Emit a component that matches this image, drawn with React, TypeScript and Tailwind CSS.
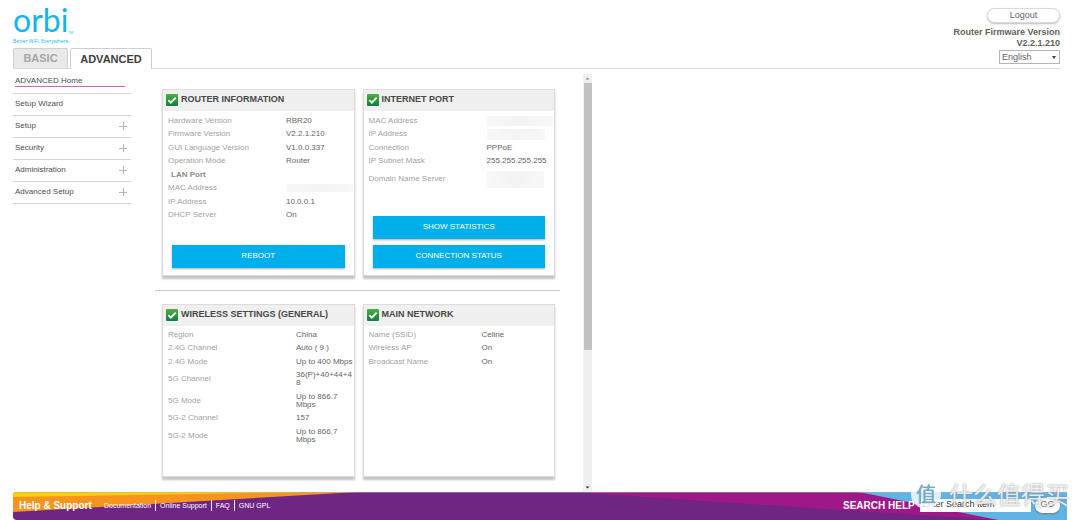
import React from "react";

type Row = { label: string; value?: string; tall?: boolean; heading?: boolean; mask?: string };

const routerRows: Row[] = [
  { label: "Hardware Version", value: "RBR20" },
  { label: "Firmware Version", value: "V2.2.1.210" },
  { label: "GUI Language Version", value: "V1.0.0.337" },
  { label: "Operation Mode", value: "Router" },
  { label: "LAN Port", heading: true },
  { label: "MAC Address", mask: "h-2 w-[67px]" },
  { label: "IP Address", value: "10.0.0.1" },
  { label: "DHCP Server", value: "On" },
];

const internetRows: Row[] = [
  { label: "MAC Address", mask: "h-[10px] w-[66px]" },
  { label: "IP Address", mask: "h-[11px] w-[58px]" },
  { label: "Connection", value: "PPPoE" },
  { label: "IP Subnet Mask", value: "255.255.255.255" },
  { label: "Domain Name Server", mask: "h-[17px] w-[57px]", tall: true },
];

const wirelessRows: Row[] = [
  { label: "Region", value: "China" },
  { label: "2.4G Channel", value: "Auto ( 9 )" },
  { label: "2.4G Mode", value: "Up to 400 Mbps" },
  { label: "5G Channel", value: "36(P)+40+44+48", tall: true },
  { label: "5G Mode", value: "Up to 866.7 Mbps", tall: true },
  { label: "5G-2 Channel", value: "157" },
  { label: "5G-2 Mode", value: "Up to 866.7 Mbps", tall: true },
];

const networkRows: Row[] = [
  { label: "Name (SSID)", value: "Celine" },
  { label: "Wireless AP", value: "On" },
  { label: "Broadcast Name", value: "On" },
];

const menu = ["Setup", "Security", "Administration", "Advanced Setup"];

const CheckIcon = () => (
  <svg className="h-3 w-3 shrink-0" viewBox="0 0 12 12">
    <defs>
      <linearGradient id="green" x1="0" y1="0" x2="0" y2="1">
        <stop offset="0" stopColor="#4fae3f" />
        <stop offset="1" stopColor="#0c7f43" />
      </linearGradient>
    </defs>
    <rect width="12" height="12" rx="1" fill="url(#green)" />
    <path d="M2.4 6.2 4.8 8.6 9.7 3.7" fill="none" stroke="#fff" strokeWidth="1.9" />
  </svg>
);

const InfoTable = ({ rows, height, labelWidth }: { rows: Row[]; height: string; labelWidth: string }) => (
  <table className={`w-full table-fixed border-collapse text-[8px] leading-[8px] ${height}`}>
    <colgroup>
      <col className={labelWidth} />
      <col />
    </colgroup>
    <tbody>
      {rows.map((row) => (
        <tr key={row.label} className={row.tall ? "h-[21px]" : "h-[13px]"}>
          <th
            scope="row"
            className={`p-0 text-left ${row.heading ? "pl-2 font-bold text-[#8c8c8c]" : "pl-[5px] font-normal text-[#a3a3a3]"}`}
          >
            {row.label}
          </th>
          <td className="p-0 break-words text-[#666]">
            {row.mask ? (
              <div className={`bg-linear-to-r from-[#f8f8f8] via-[#f3f3f3] to-[#f8f8f8] ${row.mask}`} />
            ) : (
              row.value
            )}
          </td>
        </tr>
      ))}
    </tbody>
  </table>
);

const Panel = ({ title, children }: { title: string; children: React.ReactNode }) => (
  <section className="flex flex-col border border-[#dcdcdc] bg-white shadow-[0_3px_2px_#c4c4c4]">
    <h2 className="mb-[3px] flex h-[21px] shrink-0 items-center gap-[3px] bg-[#f0f0f0] pb-px pl-[3px] text-[9px] font-bold text-[#484848]">
      <CheckIcon />
      {title}
    </h2>
    {children}
  </section>
);

const BlueButton = ({ children }: { children: React.ReactNode }) => (
  <button className="h-[23px] w-full bg-[#00aeea] text-[8px] text-white shadow-[0_1px_2px_#aaa]">{children}</button>
);

const Header = () => (
  <header className="mr-5 ml-[13px] flex h-[69px] shrink-0 justify-between border-b border-[#dcdcdc]">
    <div className="flex flex-col justify-between">
      <div className="pt-[3px] text-[#12b5ea]">
        <div className="flex h-[35px] items-end font-[Lato] text-[32px] leading-[36px]">
          orbi<span className="text-[3px] leading-[10px]">TM</span>
        </div>
        <div className="font-['Open_Sans'] text-[5px] leading-[7px]">Better WiFi. Everywhere.</div>
      </div>
      <nav className="-mb-px flex gap-[2px] text-[11px] font-bold">
        <a
          href="#basic"
          className="mb-px flex h-[20px] w-[55px] items-center justify-center rounded-t-xs border border-b-0 border-[#cfcfcf] bg-[#e9e9e9] text-[#a6a6a6]"
        >
          BASIC
        </a>
        <a
          href="#advanced"
          className="flex h-[21px] w-[82px] items-center justify-center rounded-t-xs border border-b-0 border-[#cfcfcf] bg-white text-[#404040]"
        >
          ADVANCED
        </a>
      </nav>
    </div>
    <div className="flex flex-col items-end pt-2 text-[9px] text-[#666]">
      <button className="h-[15px] w-[73px] rounded-full border border-[#dadada] bg-white leading-[13px] shadow-[0_1px_2px_#bbb]">
        Logout
      </button>
      <div className="mt-[4px] text-right leading-[11px] font-bold text-[#65605c]">
        <div>Router Firmware Version</div>
        <div>V2.2.1.210</div>
      </div>
      <div className="relative mt-px">
        <select
          aria-label="Language"
          className="h-[14px] w-[61px] appearance-none border border-[#b5b5b5] bg-white pl-[2px] text-[9px] leading-[12px]"
        >
          <option>English</option>
        </select>
        <svg className="pointer-events-none absolute top-[6px] right-[4px] h-[3px] w-[4px]" viewBox="0 0 4 3">
          <path d="M0 0h4L2 3z" fill="#444" />
        </svg>
      </div>
    </div>
  </header>
);

const Sidebar = () => (
  <nav className="ml-[13px] w-[118px] shrink-0 text-[8px] text-[#4d4d4d]">
    <div className="h-[25px] border-b border-[#d6d6d6] pt-[7px] pr-[6px] pl-[2px]">
      <a href="#home" className="block border-b border-b-[#d65fc7] leading-[10px]">
        ADVANCED Home
      </a>
    </div>
    <a href="#wizard" className="flex h-[22px] items-center border-b border-[#d6d6d6] pb-[2px] pl-[2px]">
      Setup Wizard
    </a>
    {menu.map((item) => (
      <a
        key={item}
        href="#menu"
        className="flex h-[22px] items-center justify-between border-b border-[#d6d6d6] pr-1 pb-[2px] pl-[2px]"
      >
        {item}
        <svg className="h-2 w-2" viewBox="0 0 8 8">
          <path d="M0 4.5h8M4.5 0v8" stroke="#b5b5b5" />
        </svg>
      </a>
    ))}
  </nav>
);

const Scrollbar = () => (
  <div className="mt-[5px] ml-[23px] flex w-[9px] shrink-0 flex-col items-center bg-[#f0f0f0]">
    <svg className="h-[9px] w-[9px]" viewBox="0 0 9 9">
      <path d="M2.5 5.5h4l-2-2z" fill="#888" />
    </svg>
    <div className="h-[267px] w-2 bg-[#c1c1c1]" />
    <svg className="mt-auto h-[9px] w-[9px]" viewBox="0 0 9 9">
      <path d="M2.5 3.5h4l-2 2z" fill="#333" />
    </svg>
  </div>
);

const Footer = () => (
  <footer className="relative mr-[13px] ml-[13px] flex h-7 shrink-0 items-center justify-between pb-[2px] text-white">
    <svg className="absolute inset-0 h-full w-full rounded-tl-sm rounded-bl-sm" viewBox="0 0 1054 28" preserveAspectRatio="none">
      <rect width="1054" height="28" fill="#6f2583" />
      <path d="M0 0h345L0 20z" fill="#f7941e" />
      <path d="M0 0h300L0 5z" fill="#fdd000" />
      <path d="M560 0h494v28H965z" fill="#9e1889" />
      <path d="M846 0h208v28H985z" fill="#5fb4e5" />
      <path d="M560 1 985 28H740z" fill="#6f2583" />
      <path d="M0 0h1054" stroke="#b9a9bd" />
    </svg>
    <div className="relative flex items-center pl-[6px]">
      <strong className="w-[85px] text-[10px]">Help &amp; Support</strong>
      <div className="flex divide-x divide-white text-[7px] leading-[11px]">
        <a href="#docs" className="pr-1">Documentation</a>
        <a href="#support" className="px-1">Online Support</a>
        <a href="#faq" className="px-1">FAQ</a>
        <a href="#gpl" className="px-1">GNU GPL</a>
      </div>
    </div>
    <form className="relative flex items-center" onSubmit={(e) => e.preventDefault()}>
      <label htmlFor="search" className="w-[77px] text-[10px] font-bold">
        SEARCH HELP
      </label>
      <input
        id="search"
        defaultValue="Enter Search Item"
        className="mr-1 h-[13px] w-[111px] bg-white pl-[2px] text-[9px] text-[#333]"
      />
      <button className="mr-[7px] h-[15px] w-[25px] rounded-full bg-white text-[9px] text-[#777] shadow-[0_1px_2px_#777]">
        GO
      </button>
    </form>
    <div className="pointer-events-none absolute -top-[14px] -right-[2px] flex items-center gap-2 font-['Noto_Sans_CJK_SC',sans-serif] text-[24px] leading-[32px] text-white/80 [text-shadow:0_0_2px_#888]">
      <span className="flex h-[30px] w-[30px] items-center justify-center rounded-full bg-white/80 text-[20px] text-[#69add4] [text-shadow:0_0_1px_#999]">
        值
      </span>
      <span>什么值得买</span>
    </div>
  </footer>
);

const App = () => {
  return (
    <div className="flex h-screen min-h-[520px] flex-col overflow-hidden bg-white font-['Liberation_Sans',Arial,sans-serif]">
      <Header />
      <div className="flex flex-1">
        <Sidebar />
        <main className="ml-[24px] w-[405px] shrink-0">
          <div className="mt-[20px] mr-[5px] ml-[7px] grid grid-cols-2 gap-2">
            <Panel title="ROUTER INFORMATION">
              <InfoTable rows={routerRows} height="h-[108px]" labelWidth="w-[123px]" />
              <div className="mt-[19px] px-[9px] pb-[7px]">
                <BlueButton>REBOOT</BlueButton>
              </div>
            </Panel>
            <Panel title="INTERNET PORT">
              <InfoTable rows={internetRows} height="h-[76px]" labelWidth="w-[123px]" />
              <div className="mt-auto flex flex-col gap-[6px] px-[9px] pb-[7px]">
                <BlueButton>SHOW STATISTICS</BlueButton>
                <BlueButton>CONNECTION STATUS</BlueButton>
              </div>
            </Panel>
          </div>
          <hr className="mt-[14px] mb-[13px] border-[#cfcfcf]" />
          <div className="mr-[5px] ml-[7px] grid min-h-[173px] grid-cols-2 gap-2">
            <Panel title="WIRELESS SETTINGS (GENERAL)">
              <InfoTable rows={wirelessRows} height="h-[118px]" labelWidth="w-[133px]" />
            </Panel>
            <Panel title="MAIN NETWORK">
              <InfoTable rows={networkRows} height="h-[40px]" labelWidth="w-[118px]" />
            </Panel>
          </div>
        </main>
        <Scrollbar />
      </div>
      <Footer />
    </div>
  );
};

export default App;
